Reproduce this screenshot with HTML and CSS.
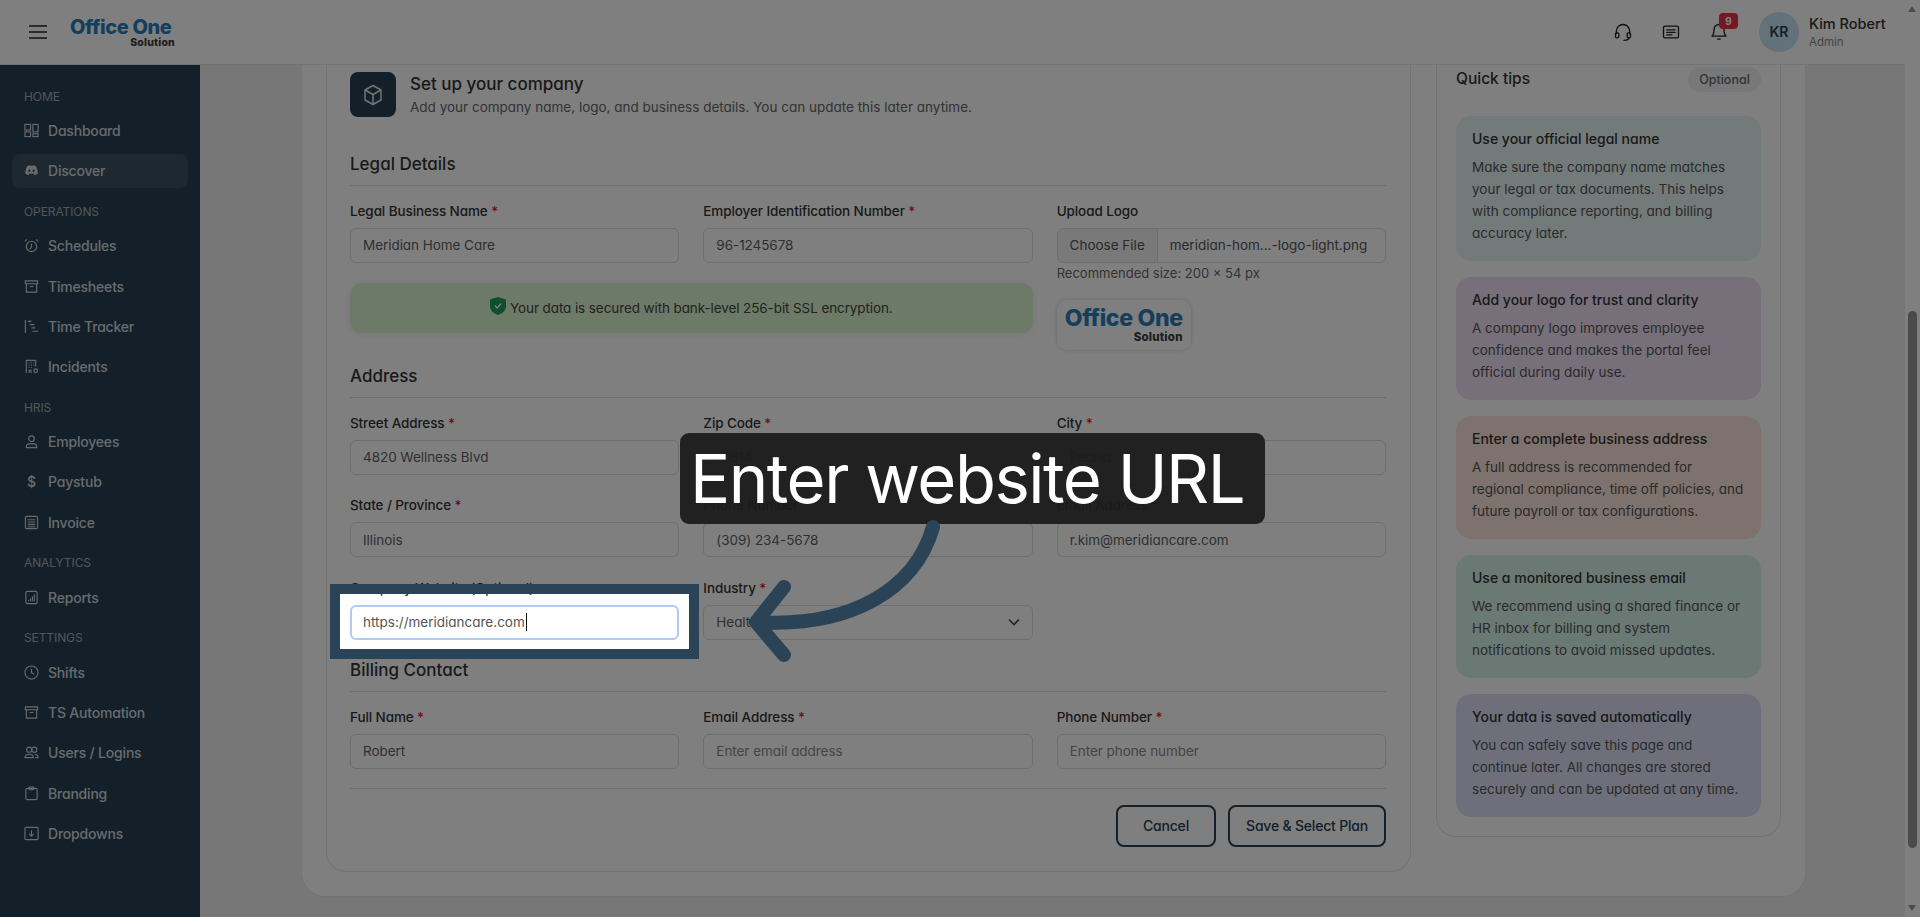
FILE: index.html
```html
<!DOCTYPE html>
<html lang="en">
<head>
    <meta charset="UTF-8">
    <title>Office One Solution</title>
    <link rel="stylesheet" href="styles.css">
</head>
<body>
    <div class="window">
        <div class="app">
            <header class="topbar">
                <svg class="burger" viewBox="0 0 18 14" width="18" height="14"><path d="M0 1h18M0 7h18M0 13h18"/></svg>
                <div class="logo">
                    <div class="logo-main">Office One</div>
                    <div class="logo-sub">Solution</div>
                </div>
                <div class="top-actions">
                    <svg class="top-icon" viewBox="0 0 24 24"><path d="M4 14v-3a8 8 0 0 1 16 0v3"/><rect x="3" y="13" width="4" height="6" rx="1.5"/><rect x="17" y="13" width="4" height="6" rx="1.5"/><path d="M19 19c0 2-2 3-6 3"/></svg>
                    <svg class="top-icon" viewBox="0 0 24 24"><rect x="3" y="5" width="18" height="14" rx="2"/><path d="M7 9.500h10M7 12.500h10M7 15.500h6"/></svg>
                    <div class="bell">
                        <svg class="top-icon" viewBox="0 0 24 24"><path d="M12 3a6 6 0 0 0-6 6c0 6-2.500 8-2.500 8h17S18 15 18 9a6 6 0 0 0-6-6z"/><path d="M10.500 20.500h3"/></svg>
                        <span class="badge">9</span>
                    </div>
                    <div class="avatar">KR</div>
                    <div class="user">
                        <div class="user-name">Kim Robert</div>
                        <div class="user-role">Admin</div>
                    </div>
                </div>
            </header>
            <div class="layout">
                <nav class="sidebar">
                    <div class="nav-label nav-label-first">HOME</div>
                    <a class="nav-item"><svg viewBox="0 0 16 16"><rect x="1" y="1.500" width="6" height="6"/><rect x="9.500" y="1.500" width="5.500" height="8"/><rect x="1" y="9.500" width="6" height="5"/><rect x="9.500" y="11.500" width="5.500" height="3"/></svg>Dashboard</a>
                    <a class="nav-item active"><svg viewBox="0 0 16 16"><path class="fill" d="M3.500 3.200C5 2.500 6 2.300 6.500 2.300l.3.700c.8-.1 1.600-.1 2.400 0l.3-.7c.6 0 1.600.2 3 .9 1.300 2.100 2.200 5 2.200 8.100-1 .9-2.300 1.500-3.400 1.700l-.8-1.300c.5-.2.900-.4 1.300-.7l-.3-.2c-2.300 1-4.700 1-7 0l-.3.200c.4.300.8.500 1.300.7l-.8 1.300c-1.100-.2-2.400-.8-3.400-1.700 0-3.100.9-6 2.200-8.100zM5.800 7a1.200 1.300 0 1 0 0 2.600 1.200 1.300 0 0 0 0-2.600zm4.400 0a1.200 1.300 0 1 0 0 2.600 1.200 1.300 0 0 0 0-2.600z"/></svg>Discover</a>
                    <div class="nav-label">OPERATIONS</div>
                    <a class="nav-item"><svg viewBox="0 0 16 16"><circle cx="8" cy="9" r="5.500"/><path d="M8 6v3.500L6.500 12M1 3.500 3 1.500M15 3.500l-2-2"/></svg>Schedules</a>
                    <a class="nav-item"><svg viewBox="0 0 16 16"><path d="M1.500 2h13v3h-13zM2.500 5v9h11V5M6 8h4"/></svg>Timesheets</a>
                    <a class="nav-item"><svg viewBox="0 0 16 16"><path d="M1.500 1v14M4 2.500h4M6 6h5M8 9.500h4M9 13h6"/></svg>Time Tracker</a>
                    <a class="nav-item"><svg viewBox="0 0 16 16"><path d="M2.500 15V1.500h10V8M5 4h1M7.500 4h1M10 4h1M5 6.500h1M7.500 6.500h1M10 6.500h1M5 9h1M7.500 9h1M5.500 15v-3h2v3"/><circle cx="12.500" cy="12.500" r="2"/></svg>Incidents</a>
                    <div class="nav-label">HRIS</div>
                    <a class="nav-item"><svg viewBox="0 0 16 16"><circle cx="8" cy="5" r="3"/><path d="M2.500 14.500v-1a3 3 0 0 1 3-3h5a3 3 0 0 1 3 3v1z"/></svg>Employees</a>
                    <a class="nav-item"><span class="nav-glyph">$</span>Paystub</a>
                    <a class="nav-item"><svg viewBox="0 0 16 16"><rect x="1.500" y="1.500" width="13" height="13" rx="1.500"/><path d="M4 5h8M4 7.500h8M4 10h8M4 12.500h8"/></svg>Invoice</a>
                    <div class="nav-label">ANALYTICS</div>
                    <a class="nav-item"><svg viewBox="0 0 16 16"><rect x="2" y="1.500" width="12" height="13" rx="1.500"/><path d="M5 12v-1.500M7 12V9M9 12V7M11 12V4.500"/></svg>Reports</a>
                    <div class="nav-label">SETTINGS</div>
                    <a class="nav-item"><svg viewBox="0 0 16 16"><circle cx="8" cy="8" r="7"/><path d="M8 4v4.200l3 1.800"/></svg>Shifts</a>
                    <a class="nav-item"><svg viewBox="0 0 16 16"><path d="M1.500 2h13v3h-13zM2.500 5v9h11V5M6 8h4"/></svg>TS Automation</a>
                    <a class="nav-item"><svg viewBox="0 0 16 16"><circle cx="5.500" cy="5" r="2.700"/><circle cx="11" cy="5" r="2.700"/><path d="M1 13.500c0-2.500 2-3.700 4.500-3.700s4.500 1.200 4.500 3.700zM11.500 9.800c2 0 3.500 1.300 3.500 3.700h-3"/></svg>Users / Logins</a>
                    <a class="nav-item"><svg viewBox="0 0 16 16"><rect x="2" y="2.500" width="12" height="12" rx="1.500"/><rect x="5.500" y="1" width="5" height="3" rx=".8"/></svg>Branding</a>
                    <a class="nav-item"><svg viewBox="0 0 16 16"><rect x="1" y="1.500" width="14" height="13" rx="1"/><path d="M8 4.500v6.500M5.500 8.500 8 11l2.500-2.500"/></svg>Dropdowns</a>
                </nav>
                <main class="main">
                    <div class="outer-card">
                        <section class="form-card">
                            <div class="card-head">
                                <div class="head-icon">
                                    <svg viewBox="0 0 24 24" width="24" height="24"><path d="M12 2.500 20 7v10l-8 4.500L4 17V7z"/><path d="M4 7l8 4.500L20 7M12 11.500v10"/></svg>
                                </div>
                                <div>
                                    <h1 class="card-title">Set up your company</h1>
                                    <p class="card-sub">Add your company name, logo, and business details. You can update this later anytime.</p>
                                </div>
                            </div>

                            <div class="section section-legal">
                                <h2 class="section-title">Legal Details</h2>
                                <div class="grid grid-legal">
                                    <div class="field">
                                        <label>Legal Business Name <i>*</i></label>
                                        <div class="input">Meridian Home Care</div>
                                    </div>
                                    <div class="field">
                                        <label>Employer Identification Number <i>*</i></label>
                                        <div class="input">96-1245678</div>
                                    </div>
                                    <div class="field upload">
                                        <label>Upload Logo</label>
                                        <div class="file-input">
                                            <span class="file-btn">Choose File</span>
                                            <span class="file-name">meridian-hom...-logo-light.png</span>
                                        </div>
                                        <div class="hint">Recommended size: 200 × 54 px</div>
                                        <div class="logo-preview">
                                            <div class="logo-main">Office One</div>
                                            <div class="logo-sub">Solution</div>
                                        </div>
                                    </div>
                                    <div class="secure-banner">
                                        <svg viewBox="0 0 16 18" width="16" height="18"><path d="M8 0 16 2.500V9c0 4.500-3.500 7.500-8 9-4.500-1.500-8-4.500-8-9V2.500z"/><path class="check" d="M5 8.500 7.300 11 11 6.500"/></svg>
                                        Your data is secured with bank-level 256-bit SSL encryption.
                                    </div>
                                </div>
                            </div>

                            <div class="section section-address">
                                <h2 class="section-title">Address</h2>
                                <div class="grid">
                                    <div class="field">
                                        <label>Street Address <i>*</i></label>
                                        <div class="input">4820 Wellness Blvd</div>
                                    </div>
                                    <div class="field">
                                        <label>Zip Code <i>*</i></label>
                                        <div class="input">61614</div>
                                    </div>
                                    <div class="field">
                                        <label>City <i>*</i></label>
                                        <div class="input">Peoria</div>
                                    </div>
                                    <div class="field">
                                        <label>State / Province <i>*</i></label>
                                        <div class="input">Illinois</div>
                                    </div>
                                    <div class="field">
                                        <label>Phone Number <i>*</i></label>
                                        <div class="input">(309) 234-5678</div>
                                    </div>
                                    <div class="field">
                                        <label>Email Address <i>*</i></label>
                                        <div class="input">r.kim@meridiancare.com</div>
                                    </div>
                                    <div class="field">
                                        <label>Company Website (Optional)</label>
                                        <div class="input input-focus">https://meridiancare.com<span class="caret"></span></div>
                                    </div>
                                    <div class="field">
                                        <label>Industry <i>*</i></label>
                                        <div class="input input-select">Healthcare
                                            <svg viewBox="0 0 12 8" width="12" height="8"><path d="M1 1.500 6 6.500 11 1.500"/></svg>
                                        </div>
                                    </div>
                                </div>
                            </div>

                            <div class="section">
                                <h2 class="section-title">Billing Contact</h2>
                                <div class="grid">
                                    <div class="field">
                                        <label>Full Name <i>*</i></label>
                                        <div class="input">Robert</div>
                                    </div>
                                    <div class="field">
                                        <label>Email Address <i>*</i></label>
                                        <div class="input placeholder">Enter email address</div>
                                    </div>
                                    <div class="field">
                                        <label>Phone Number <i>*</i></label>
                                        <div class="input placeholder">Enter phone number</div>
                                    </div>
                                </div>
                            </div>

                            <div class="form-actions">
                                <button class="btn btn-cancel">Cancel</button>
                                <button class="btn btn-save">Save &amp; Select Plan</button>
                            </div>
                        </section>

                        <aside class="tips-card">
                            <div class="tips-head">
                                <h2 class="tips-title">Quick tips</h2>
                                <span class="pill">Optional</span>
                            </div>
                            <div class="tip tip-blue">
                                <h3>Use your official legal name</h3>
                                <p>Make sure the company name matches your legal or tax documents. This helps with compliance reporting, and billing accuracy later.</p>
                            </div>
                            <div class="tip tip-purple">
                                <h3>Add your logo for trust and clarity</h3>
                                <p>A company logo improves employee confidence and makes the portal feel official during daily use.</p>
                            </div>
                            <div class="tip tip-orange">
                                <h3>Enter a complete business address</h3>
                                <p>A full address is recommended for regional compliance, time off policies, and future payroll or tax configurations.</p>
                            </div>
                            <div class="tip tip-green">
                                <h3>Use a monitored business email</h3>
                                <p>We recommend using a shared finance or HR inbox for billing and system notifications to avoid missed updates.</p>
                            </div>
                            <div class="tip tip-indigo">
                                <h3>Your data is saved automatically</h3>
                                <p>You can safely save this page and continue later. All changes are stored securely and can be updated at any time.</p>
                            </div>
                        </aside>
                    </div>
                </main>
            </div>
        </div>
        <div class="scrollbar">
            <span class="arrow-up"></span>
            <span class="thumb"></span>
            <span class="arrow-down"></span>
        </div>
    </div>

    <!-- guide overlay -->
    <div class="spotlight"></div>
    <div class="callout">Enter website URL</div>
    <svg class="guide-arrow" viewBox="0 0 1920 917" width="1920" height="917">
        <path d="M933 527C915 590 850 628 756 622M784 587 756 622 784 655"/>
    </svg>
</body>
</html>
```

FILE: styles.css
```css
* {
    box-sizing: border-box;
}

html, body {
    height: 100%;
}

body {
    margin: 0;
    overflow: hidden;
    font-family: "Inter", "Liberation Sans", sans-serif;
    font-feature-settings: "cv11";
    color: #3e3e3e;
    background: #eeeeee;
}

.window {
    display: flex;
    height: 917px;
}

.app {
    flex: 1;
    min-width: 0;
    display: flex;
    flex-direction: column;
}

/* top bar */
.topbar {
    height: 65px;
    flex-shrink: 0;
    display: flex;
    align-items: center;
    padding-left: 29px;
    background: #ffffff;
    border-bottom: 1px solid #e6e6e6;
}

.burger {
    fill: none;
    stroke: #222;
    stroke-width: 1.6;
}

.logo {
    margin-left: 23px;
    width: 105px;
}

.logo-main {
    font-size: 20px;
    line-height: 20px;
    font-weight: 800;
    letter-spacing: -0.4px;
    color: #2b7dbb;
    white-space: nowrap;
}

.logo-sub {
    font-size: 10.5px;
    line-height: 11px;
    font-weight: 800;
    letter-spacing: 0.2px;
    color: #3c3c3c;
    text-align: right;
}

.top-actions {
    margin-left: auto;
    display: flex;
    align-items: center;
    padding-right: 24px;
}

.top-icon {
    width: 20px;
    height: 20px;
    fill: none;
    stroke: #222;
    stroke-width: 1.6;
    stroke-linecap: round;
    stroke-linejoin: round;
    margin-left: 28px;
    display: block;
}

.bell {
    position: relative;
}

.badge {
    position: absolute;
    top: -9px;
    left: 38px;
    width: 19px;
    height: 16px;
    border-radius: 4px;
    background: #e83347;
    color: #ffffff;
    font-size: 10px;
    font-weight: 700;
    line-height: 16px;
    text-align: center;
}

.avatar {
    width: 40px;
    height: 40px;
    margin-left: 30px;
    border-radius: 50%;
    background: #c6e2f6;
    color: #264054;
    font-size: 14px;
    font-weight: 600;
    line-height: 40px;
    text-align: center;
}

.user {
    margin-left: 10px;
    width: 72px;
}

.user-name {
    font-size: 14.5px;
    line-height: 18px;
    font-weight: 500;
    color: #333;
    white-space: nowrap;
}

.user-role {
    margin-top: 2px;
    font-size: 11.5px;
    line-height: 14px;
    color: #888;
}

.layout {
    flex: 1;
    min-height: 0;
    display: flex;
}

/* sidebar */
.sidebar {
    width: 200px;
    flex-shrink: 0;
    display: flex;
    flex-direction: column;
    gap: 6px;
    padding: 20.5px 12px 0;
    background: #264054;
}

.nav-label {
    height: 22px;
    flex-shrink: 0;
    margin-top: 7px;
    padding-left: 12px;
    font-size: 12px;
    line-height: 22px;
    letter-spacing: -0.1px;
    color: #a3adb5;
}

.nav-label-first {
    margin-top: 0;
}

.nav-item {
    height: 34.2px;
    flex-shrink: 0;
    display: flex;
    align-items: center;
    gap: 9px;
    padding-left: 12px;
    border-radius: 8px;
    font-size: 14px;
    font-weight: 500;
    letter-spacing: -0.2px;
    color: #d2d6d9;
}

.nav-item.active {
    background: #3a5162;
}

.nav-item svg {
    width: 15px;
    height: 15px;
    flex-shrink: 0;
    fill: none;
    stroke: currentColor;
    stroke-width: 1.2;
}

.nav-item svg .fill {
    fill: currentColor;
    stroke: none;
}

.nav-glyph {
    width: 15px;
    text-align: center;
    font-size: 14px;
}

/* main */
.main {
    flex: 1;
    min-width: 0;
    padding-left: 101px;
}

.outer-card {
    width: 1505px;
    height: 832px;
    display: flex;
    align-items: flex-start;
    gap: 25px;
    padding: 0 24px;
    background: #ffffff;
    border: 1px solid #e8e8e8;
    border-top: 0;
    border-radius: 0 0 24px 24px;
}

.form-card {
    width: 1085px;
    height: 807px;
    flex-shrink: 0;
    padding: 7px 24px 0 23px;
    border: 1px solid #e6e6e6;
    border-top: 0;
    border-radius: 0 0 20px 20px;
}

.card-head {
    display: flex;
    gap: 14px;
}

.head-icon {
    width: 46px;
    height: 45px;
    flex-shrink: 0;
    display: flex;
    align-items: center;
    justify-content: center;
    border-radius: 8px;
    background: #264054;
}

.head-icon svg {
    fill: none;
    stroke: #e8e8e8;
    stroke-width: 1.5;
    stroke-linejoin: round;
}

.card-title {
    margin: 2px 0 0;
    font-size: 17px;
    line-height: 20px;
    font-weight: 500;
    color: #333;
}

.card-sub {
    margin: 3px 0 0;
    font-size: 13.5px;
    line-height: 20px;
    color: #666;
    white-space: nowrap;
}

.section-title {
    margin: 0;
    padding-bottom: 10px;
    border-bottom: 1px solid #dddddd;
    font-size: 17px;
    line-height: 22px;
    font-weight: 500;
    color: #333;
}

.section-legal {
    margin-top: 35.5px;
    margin-bottom: 15px;
}

.section-address {
    margin-bottom: 19px;
}

.grid {
    display: grid;
    grid-template-columns: repeat(3, 1fr);
    column-gap: 24px;
    row-gap: 21.5px;
    margin-top: 16px;
}

.grid-legal {
    grid-template-rows: 61px auto;
    row-gap: 20px;
}

.field label {
    display: block;
    height: 18px;
    margin-bottom: 8px;
    font-size: 13.5px;
    line-height: 18px;
    font-weight: 500;
    letter-spacing: -0.1px;
    color: #333;
    white-space: nowrap;
}

.field label i {
    font-style: normal;
    color: #e0101c;
}

.input {
    height: 35px;
    display: flex;
    align-items: center;
    padding: 0 12px;
    background: #ffffff;
    border: 1px solid #dcdcdc;
    border-radius: 6px;
    font-size: 13.5px;
    letter-spacing: -0.05px;
    color: #5f5f5f;
}

.placeholder {
    color: #8a8a8a;
}

.input-focus {
    border: 2px solid #aecbf5;
    padding: 0 11px;
    color: #555;
    letter-spacing: 0;
}

.caret {
    width: 1px;
    height: 18px;
    margin-left: 1px;
    background: #111;
}

.input-select {
    justify-content: space-between;
}

.input-select svg {
    fill: none;
    stroke: #444;
    stroke-width: 1.6;
}

.upload {
    grid-column: 3;
    grid-row: 1 / 3;
}

.file-input {
    height: 35px;
    display: flex;
    align-items: center;
    border: 1px solid #dcdcdc;
    border-radius: 6px;
    font-size: 13.5px;
    color: #555;
}

.file-btn {
    width: 100px;
    height: 100%;
    display: flex;
    align-items: center;
    justify-content: center;
    flex-shrink: 0;
    background: #f2f2f2;
    border-right: 1px solid #dcdcdc;
    border-radius: 6px 0 0 6px;
}

.file-name {
    padding-left: 12px;
    white-space: nowrap;
}

.hint {
    margin-top: 2px;
    font-size: 13px;
    line-height: 16px;
    color: #666;
}

.logo-preview {
    width: 134px;
    height: 50px;
    margin-top: 19px;
    padding: 6px 8px 0;
    background: #ffffff;
    border-radius: 10px;
    box-shadow: 0 0 4px rgba(0, 0, 0, 0.2);
}

.logo-preview .logo-main {
    font-size: 23px;
    line-height: 25px;
    letter-spacing: -0.3px;
}

.logo-preview .logo-sub {
    font-size: 11.5px;
    line-height: 12px;
}

.secure-banner {
    grid-column: 1 / 3;
    grid-row: 2;
    align-self: start;
    height: 50px;
    display: flex;
    align-items: center;
    justify-content: center;
    gap: 4px;
    border-radius: 12px;
    background: #daf4cf;
    font-size: 13.5px;
    letter-spacing: -0.1px;
    color: #444;
    box-shadow: 0 1px 6px rgba(0, 0, 0, 0.08);
}

.secure-banner svg {
    fill: #1f9d60;
    margin-top: -3px;
}

.secure-banner .check {
    fill: none;
    stroke: #ffffff;
    stroke-width: 1.2;
}

.form-actions {
    display: flex;
    justify-content: flex-end;
    gap: 12px;
    margin-top: 19px;
    padding-top: 16px;
    border-top: 1px solid #dddddd;
}

.btn {
    height: 42px;
    padding: 0;
    background: #ffffff;
    border: 2px solid #264054;
    border-radius: 8px;
    font-family: inherit;
    font-feature-settings: inherit;
    font-size: 14px;
    font-weight: 500;
    letter-spacing: -0.2px;
    color: #264054;
}

.btn-cancel {
    width: 100px;
}

.btn-save {
    width: 158px;
}

/* quick tips */
.tips-card {
    width: 345px;
    height: 772px;
    flex-shrink: 0;
    padding: 2px 19px 0;
    border: 1px solid #e6e6e6;
    border-top: 0;
    border-radius: 0 0 20px 20px;
}

.tips-head {
    height: 49px;
    display: flex;
    justify-content: space-between;
    align-items: flex-start;
}

.tips-title {
    margin: 2px 0 0;
    font-size: 15.5px;
    line-height: 20px;
    font-weight: 500;
    color: #333;
}

.pill {
    width: 73px;
    height: 25px;
    border-radius: 13px;
    background: #eef0f2;
    font-size: 12.5px;
    font-weight: 500;
    line-height: 25px;
    text-align: center;
    color: #666;
}

.tip {
    margin-bottom: 16px;
    padding: 14px 16px 17px;
    border-radius: 15px;
}

.tip h3 {
    margin: 0 0 8px;
    font-size: 14px;
    line-height: 18px;
    font-weight: 500;
    color: #333;
}

.tip p {
    margin: 0;
    font-size: 13.5px;
    line-height: 22px;
    color: #555;
}

.tip-blue { background: #e6f5f4; }
.tip-purple { background: #efe1f5; }
.tip-orange { background: #fbe5da; }
.tip-green { background: #d7f2e8; }
.tip-indigo { background: #dcdff4; }

/* fake scrollbar */
.scrollbar {
    width: 15px;
    flex-shrink: 0;
    position: relative;
    background: #ffffff;
}

.thumb {
    position: absolute;
    top: 311px;
    left: 3px;
    width: 9px;
    height: 537px;
    border-radius: 5px;
    background: #969696;
}

.arrow-up,
.arrow-down {
    position: absolute;
    left: 3px;
    width: 0;
    height: 0;
    border-left: 4.5px solid transparent;
    border-right: 4.5px solid transparent;
}

.arrow-up {
    top: 6px;
    border-bottom: 6px solid #969696;
}

.arrow-down {
    bottom: 6px;
    border-top: 6px solid #969696;
}

/* guide overlay */
.spotlight {
    position: absolute;
    left: 330px;
    top: 584px;
    width: 369px;
    height: 75px;
    border: 10px solid #2a4356;
    box-shadow: 0 0 0 3000px rgba(0, 0, 0, 0.5);
}

.callout {
    position: absolute;
    left: 680px;
    top: 433px;
    width: 585px;
    height: 91px;
    padding-right: 11px;
    border-radius: 9px;
    background: rgba(28, 28, 28, 0.94);
    color: #ffffff;
    font-size: 67px;
    line-height: 91px;
    text-align: center;
    letter-spacing: -1.5px;
}

.guide-arrow {
    position: absolute;
    left: 0;
    top: 0;
    fill: none;
    stroke: #2a4356;
    stroke-width: 14;
    stroke-linecap: round;
    stroke-linejoin: round;
}
```
